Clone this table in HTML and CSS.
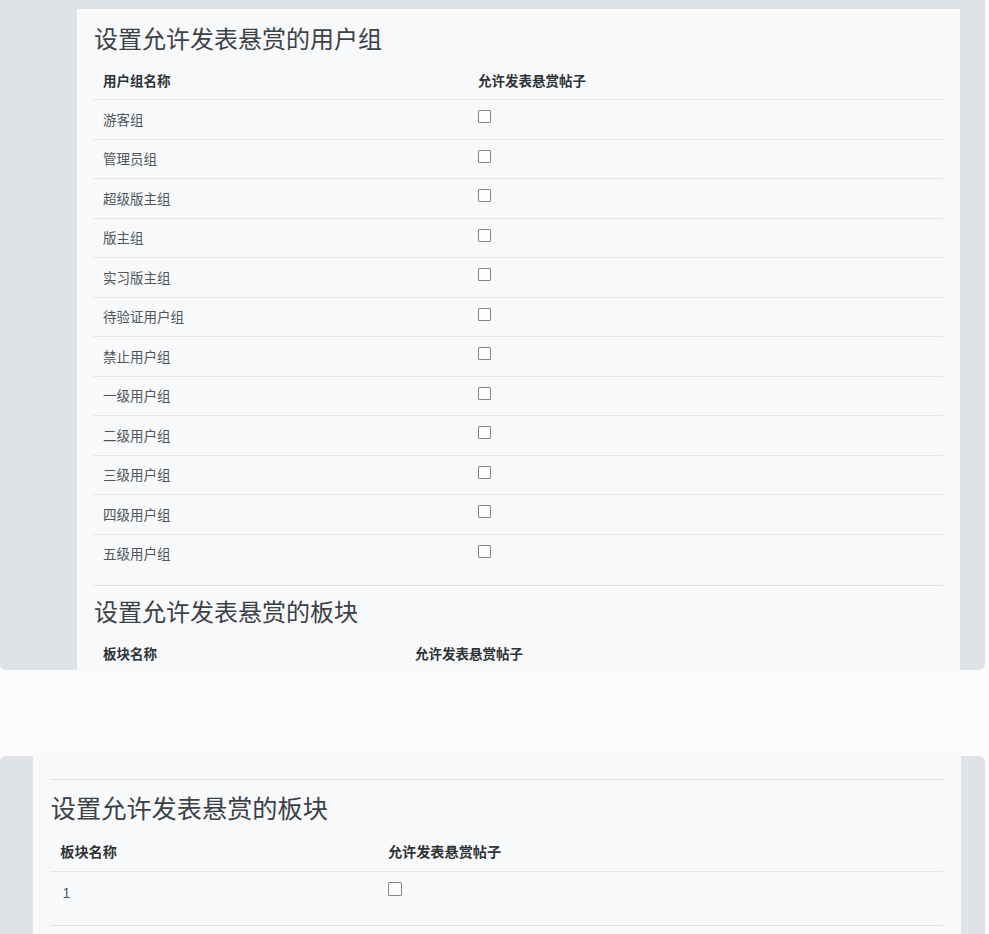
FILE: index.html
```html
<!DOCTYPE html>
<html lang="zh-CN">
<head>
<meta charset="utf-8">
<title>悬赏设置</title>
<link rel="stylesheet" href="styles.css">
</head>
<body>
<div class="shot shot-top">
  <div class="card">
    <h4 class="title">设置允许发表悬赏的用户组</h4>
    <table class="grid">
      <thead>
        <tr><th class="c1 c1-groups">用户组名称</th><th>允许发表悬赏帖子</th></tr>
      </thead>
      <tbody>
        <tr><td>游客组</td><td><input type="checkbox" class="chk"></td></tr>
        <tr><td>管理员组</td><td><input type="checkbox" class="chk"></td></tr>
        <tr><td>超级版主组</td><td><input type="checkbox" class="chk"></td></tr>
        <tr><td>版主组</td><td><input type="checkbox" class="chk"></td></tr>
        <tr><td>实习版主组</td><td><input type="checkbox" class="chk"></td></tr>
        <tr><td>待验证用户组</td><td><input type="checkbox" class="chk"></td></tr>
        <tr><td>禁止用户组</td><td><input type="checkbox" class="chk"></td></tr>
        <tr><td>一级用户组</td><td><input type="checkbox" class="chk"></td></tr>
        <tr><td>二级用户组</td><td><input type="checkbox" class="chk"></td></tr>
        <tr><td>三级用户组</td><td><input type="checkbox" class="chk"></td></tr>
        <tr><td>四级用户组</td><td><input type="checkbox" class="chk"></td></tr>
        <tr><td>五级用户组</td><td><input type="checkbox" class="chk"></td></tr>
      </tbody>
    </table>
    <hr class="rule">
    <h4 class="title">设置允许发表悬赏的板块</h4>
    <table class="grid">
      <thead>
        <tr><th class="c1 c1-forums">板块名称</th><th>允许发表悬赏帖子</th></tr>
      </thead>
    </table>
  </div>
</div>

<div class="shot shot-bottom">
  <div class="card card-zoom">
    <hr class="rule rule-first">
    <h4 class="title">设置允许发表悬赏的板块</h4>
    <table class="grid">
      <thead>
        <tr><th class="c1 c1-forums">板块名称</th><th>允许发表悬赏帖子</th></tr>
      </thead>
      <tbody>
        <tr><td class="num">1</td><td><input type="checkbox" class="chk"></td></tr>
      </tbody>
    </table>
    <hr class="rule">
  </div>
</div>
</body>
</html>
```

FILE: styles.css
```css
* { box-sizing: border-box; }

html, body {
  margin: 0;
  padding: 0;
  background: #fbfbfc;
  font-family: "Liberation Sans", "Noto Sans CJK SC", sans-serif;
  color: #495057;
}

.shot {
  width: 985px;
  background: #dfe2e6;
  overflow: hidden;
}

.shot-top {
  height: 670px;
  padding: 9px 0 0 77px;
  border-radius: 0 0 6px 6px;
}

.shot-bottom {
  margin-top: 86px;
  height: 178px;
  padding: 0 0 0 33px;
  border-radius: 6px 6px 0 0;
}

.card {
  width: 883px;
  background: #f8f9fa;
  padding: 17px 17px 40px 16px;
}

.card-zoom {
  zoom: 1.05;
  width: 884px;
  padding-top: 22px;
}

.title {
  margin: 0 0 6px 0;
  font-size: 24px;
  line-height: 28.8px;
  font-weight: 400;
  color: #3d4146;
  padding-left: 1px;
}

.grid {
  width: 100%;
  border-collapse: collapse;
  font-size: 13.5px;
  line-height: 14.5px;
  margin-bottom: 12px;
}

.grid th {
  text-align: left;
  font-weight: 700;
  color: #2f3337;
  padding: 14px 10px 10px;
}

.grid td {
  padding: 13.5px 10px 10.5px;
  border-top: 1px solid #e4e7ea;
  color: #50555a;
  vertical-align: top;
}

.grid td.num { padding-left: 12px; }

.c1-groups { width: 375px; }
.c1-forums { width: 312px; }

.chk {
  -webkit-appearance: none;
  appearance: none;
  display: block;
  width: 13px;
  height: 13px;
  margin: -3.5px 0 0 0;
  border: 1px solid #868686;
  border-radius: 1px;
  background: #fdfdfd;
}

.rule {
  margin: 0 0 13px 0;
  border: 0;
  border-top: 1px solid #dfe2e5;
  height: 0;
}

.rule-first {
  margin-top: 0;
}
```
